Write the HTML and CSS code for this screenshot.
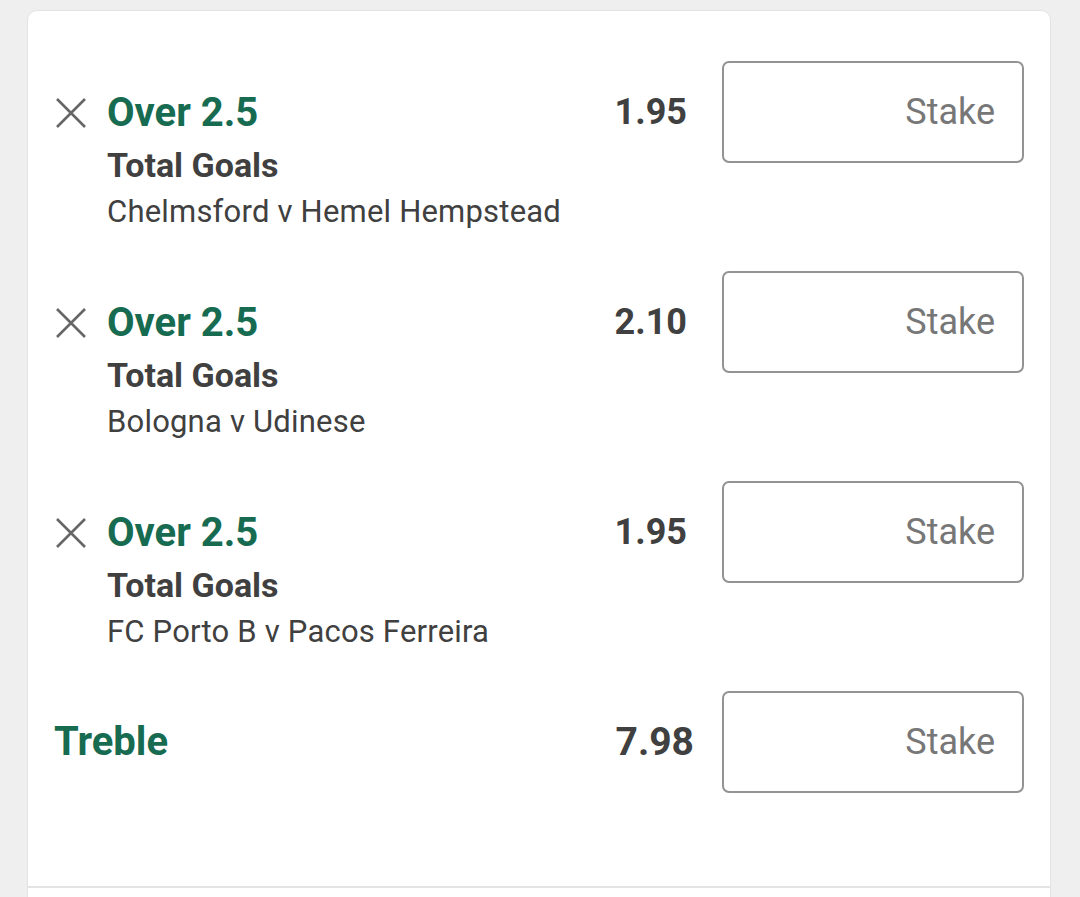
FILE: index.html
```html
<!DOCTYPE html>
<html lang="en">
<head>
<meta charset="utf-8">
<title>Bet slip</title>
<link rel="stylesheet" href="styles.css">
</head>
<body>
<div class="card">
  <div class="list">
    <div class="sel">
      <button class="remove" aria-label="Remove">
        <svg viewBox="0 0 32 32" width="32" height="32"><path d="M2 2 L30 30 M30 2 L2 30" stroke="#666" stroke-width="2.6" fill="none"/></svg>
      </button>
      <div class="info">
        <div class="pick">Over 2.5</div>
        <div class="market">Total Goals</div>
        <div class="event">Chelmsford v Hemel Hempstead</div>
      </div>
      <div class="odds">1.95</div>
      <input class="stake" type="text" placeholder="Stake">
    </div>
    <div class="sel">
      <button class="remove" aria-label="Remove">
        <svg viewBox="0 0 32 32" width="32" height="32"><path d="M2 2 L30 30 M30 2 L2 30" stroke="#666" stroke-width="2.6" fill="none"/></svg>
      </button>
      <div class="info">
        <div class="pick">Over 2.5</div>
        <div class="market">Total Goals</div>
        <div class="event">Bologna v Udinese</div>
      </div>
      <div class="odds">2.10</div>
      <input class="stake" type="text" placeholder="Stake">
    </div>
    <div class="sel">
      <button class="remove" aria-label="Remove">
        <svg viewBox="0 0 32 32" width="32" height="32"><path d="M2 2 L30 30 M30 2 L2 30" stroke="#666" stroke-width="2.6" fill="none"/></svg>
      </button>
      <div class="info">
        <div class="pick">Over 2.5</div>
        <div class="market">Total Goals</div>
        <div class="event">FC Porto B v Pacos Ferreira</div>
      </div>
      <div class="odds">1.95</div>
      <input class="stake" type="text" placeholder="Stake">
    </div>
    <div class="sel multi">
      <div class="multi-name">Treble</div>
      <div class="odds odds-multi">7.98</div>
      <input class="stake" type="text" placeholder="Stake">
    </div>
  </div>
  <div class="footer"></div>
</div>
</body>
</html>
```
FILE: styles.css
```css
html, body {
  margin: 0;
  padding: 0;
  overflow: hidden;
  height: 100%;
}
body {
  background: #efefef;
  font-family: Roboto, "Liberation Sans", sans-serif;
}
.card {
  margin: 10px 29px 0 27px;
  background: #fff;
  border: 1px solid #e3e3e3;
  border-radius: 10px;
  min-height: 1000px;
}
.list {
  padding: 50px 26px 93px 27px;
}
.sel {
  display: flex;
  align-items: flex-start;
  margin-bottom: 39px;
}
.sel:last-child {
  margin-bottom: 0;
}
.remove {
  margin: 36px 20px 0 0;
  padding: 0;
  border: 0;
  background: none;
  width: 32px;
  height: 32px;
  display: block;
}
.remove svg {
  display: block;
}
.info {
  flex: 1;
  margin-top: 27px;
  color: #404040;
}
.pick {
  font-size: 40px;
  line-height: 50px;
  font-weight: 700;
  color: #176b50;
}
.market {
  font-size: 34px;
  line-height: 54px;
  font-weight: 700;
}
.event {
  font-size: 31px;
  line-height: 40px;
  letter-spacing: 0.2px;
}
.odds {
  font-size: 36px;
  font-weight: 700;
  line-height: 102px;
  color: #404040;
  margin-right: 35px;
}
.odds-multi {
  font-size: 39px;
  margin-right: 28px;
}
.multi-name {
  flex: 1;
  margin-left: -1px;
  font-size: 40px;
  font-weight: 700;
  line-height: 102px;
  color: #176b50;
}
.stake {
  box-sizing: border-box;
  width: 302px;
  height: 102px;
  border: 2px solid #939393;
  border-radius: 7px;
  padding: 0 27px 0 10px;
  font-family: Roboto, "Liberation Sans", sans-serif;
  font-size: 36px;
  text-align: right;
  color: #404040;
  background: #fff;
  outline: none;
}
.stake::placeholder {
  color: #777;
  opacity: 1;
}
.footer {
  border-top: 2px solid #e4e4e4;
  height: 200px;
}
```
